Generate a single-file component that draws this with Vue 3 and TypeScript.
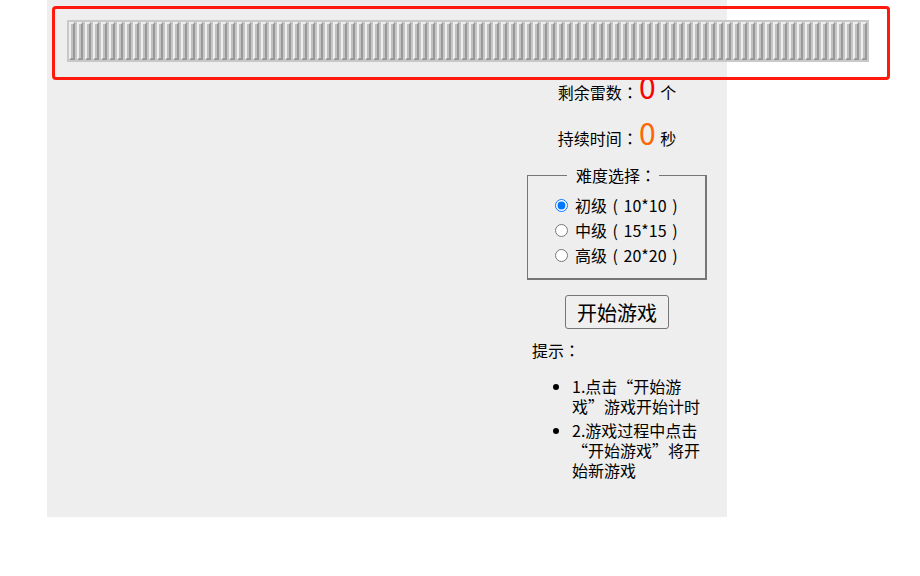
<script setup lang="ts">
import { ref } from 'vue'

const level = ref('easy')

const levels = [
  { value: 'easy', label: '初级 ( 10*10 )' },
  { value: 'mid', label: '中级 ( 15*15 )' },
  { value: 'hard', label: '高级 ( 20*20 )' }
]

const cells = Array.from({ length: 100 }, (_, i) => i)
</script>

<template>
  <div class="page">
    <div class="panel">
      <aside class="side">
        <div class="stat stat-first">剩余雷数<span class="colon">：</span><span class="num red">0</span> 个</div>
        <div class="stat">持续时间<span class="colon">：</span><span class="num orange">0</span> 秒</div>
        <fieldset class="levels">
          <legend>难度选择<span class="colon">：</span></legend>
          <label v-for="item in levels" :key="item.value" class="level">
            <input v-model="level" type="radio" name="level" :value="item.value" />
            <span>{{ item.label }}</span>
          </label>
        </fieldset>
        <button class="start" type="button">开始游戏</button>
        <div class="tips">
          <p>提示<span class="colon">：</span></p>
          <ul>
            <li>1.点击“开始游戏”游戏开始计时</li>
            <li>2.游戏过程中点击&#8203;“开始游戏”将开始新游戏</li>
          </ul>
        </div>
      </aside>
    </div>

    <!-- highlighted strip that lies over the panel -->
    <div class="highlight">
      <div class="strip">
        <span v-for="cell in cells" :key="cell" class="cell"></span>
      </div>
    </div>
  </div>
</template>

<style scoped>
.page {
  position: relative;
  width: 920px;
  height: 576px;
  overflow: hidden;
  background: #fff;
  color: #000;
  font-family: "Noto Sans CJK SC", "Liberation Sans", sans-serif;
  font-size: 16px;
}

.panel {
  display: flex;
  justify-content: flex-end;
  box-sizing: border-box;
  width: 680px;
  height: 517px;
  margin-left: 47px;
  padding-right: 25px;
  background: #eee;
}

.side {
  display: flex;
  flex-direction: column;
  align-items: center;
  width: 170px;
}

.stat {
  height: 46px;
  line-height: 46px;
  white-space: nowrap;
}

.stat-first {
  margin-top: 69px;
}

/* the full-width colon sits centred in its cell in the reference */
.colon {
  font-family: "Noto Sans CJK TC", sans-serif;
}

.num {
  margin: 0 1px;
  font-size: 30px;
  line-height: 30px;
}

.red {
  color: #f00;
}

.orange {
  color: #f60;
}

.levels {
  box-sizing: border-box;
  width: 180px;
  height: 114px;
  margin: 5px -5px 0;
  padding: 8px 0 0 27px;
  border-color: #767676;
  border-width: 1px 2px 2px 1px;
  border-style: solid;
}

.levels legend {
  margin-left: 12px;
  padding: 0 3px 0 9px;
  line-height: 18px;
}

.level {
  display: flex;
  align-items: center;
  height: 25px;
  white-space: nowrap;
  word-spacing: 2px;
}

.level input {
  margin: 2px 7px 0 0;
}

.start {
  box-sizing: border-box;
  width: 104px;
  height: 34px;
  margin-top: 15px;
  padding: 0;
  border: 1px solid #767676;
  border-radius: 3px;
  background: #efefef;
  color: #000;
  font-family: inherit;
  font-size: 20px;
}

.tips {
  width: 170px;
  margin-top: 11px;
}

.tips p {
  margin: 0;
  line-height: 20px;
}

.tips ul {
  margin: 16px 0 0;
  padding-left: 40px;
}

.tips li {
  margin-bottom: 4px;
  line-height: 20px;
}

.highlight {
  position: absolute;
  top: 6px;
  left: 52px;
  box-sizing: border-box;
  width: 838px;
  height: 74px;
  padding: 11px 0 0 12px;
  border: 3px solid #ff1a0d;
  border-radius: 4px;
}

.strip {
  display: flex;
  width: 802px;
  height: 42px;
  padding: 1px;
  box-sizing: border-box;
  background: #c8c8c8;
}

.cell {
  box-sizing: border-box;
  flex: none;
  width: 6px;
  height: 38px;
  margin: 1px;
  border: 2px solid;
  border-color: #eee #999 #999 #eee;
  background: #c0c0c0;
}
</style>
